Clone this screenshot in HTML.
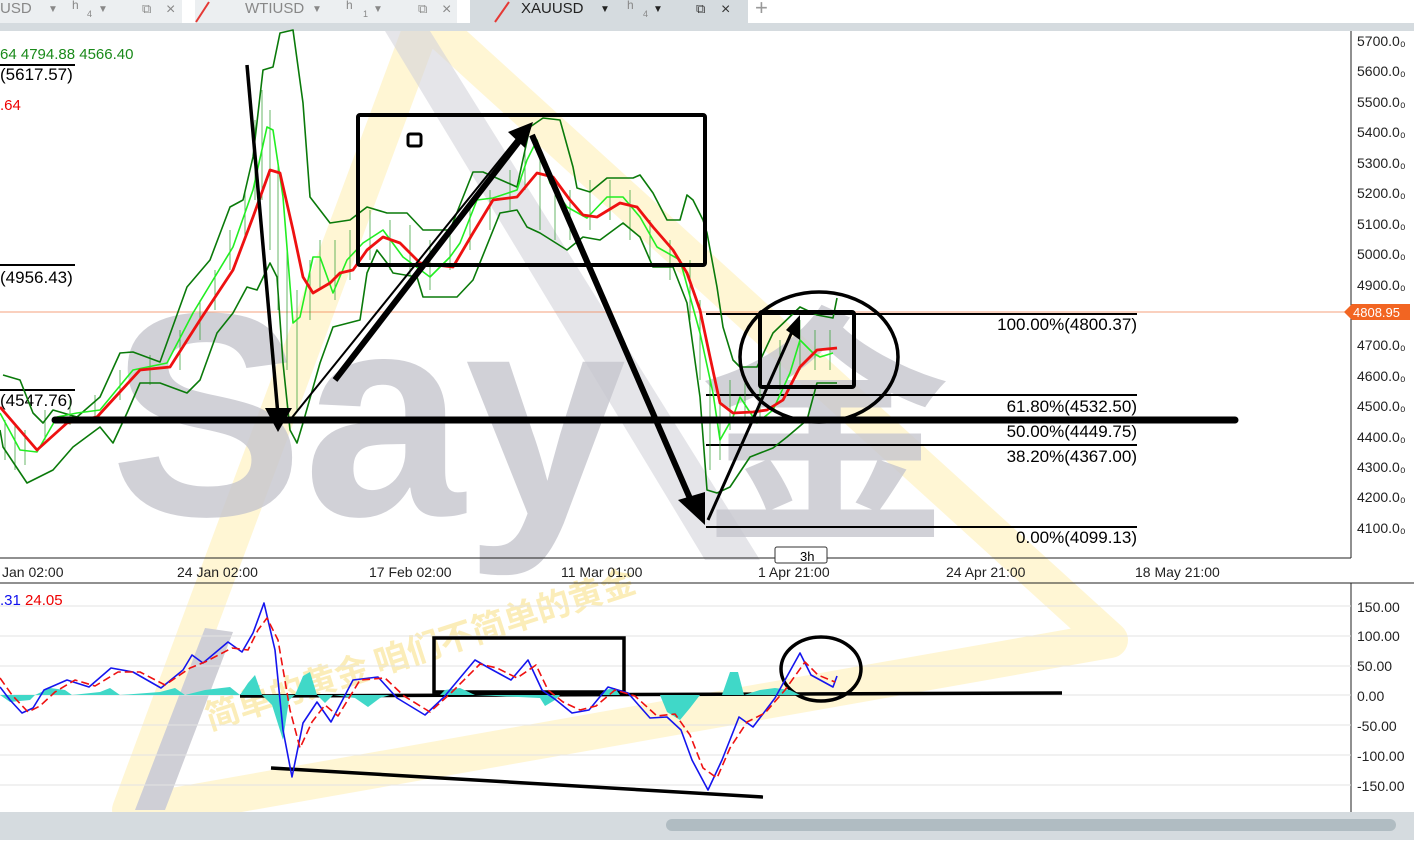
<!DOCTYPE html>
<html><head><meta charset="utf-8"><style>
body{margin:0;width:1414px;height:850px;overflow:hidden;background:#fff;font-family:"Liberation Sans","Noto Sans CJK SC",sans-serif}
svg{position:absolute;left:0;top:0}
</style></head><body>
<svg width="1414" height="850" viewBox="0 0 1414 850" font-family="Liberation Sans, DejaVu Sans, sans-serif">
<!-- watermark -->
<polygon points="130,810 420,31 440,31 1110,640 150,810" fill="none" stroke="#fff4cc" stroke-width="36" stroke-linejoin="round" opacity="0.85"/>
<polygon points="385,31 430,31 760,560 705,560" fill="#d4d4da" opacity="0.6"/>
<polygon points="205,628 233,632 165,810 135,810" fill="#cfcfd6"/>
<text x="110" y="515" font-size="290" font-weight="bold" fill="#c6c6ce" opacity="0.8">Say</text>
<text x="700" y="520" font-size="250" font-weight="bold" fill="#c6c6ce" opacity="0.8" font-family="Noto Sans CJK SC">金</text>
<text x="210" y="730" font-size="34" font-weight="bold" fill="#fbe9a8" opacity="0.8" transform="rotate(-18 210 730)" font-family="Noto Sans CJK SC">简单的黄金 咱们不简单的黄金</text>
<!-- tab bar -->
<rect x="0" y="0" width="1414" height="23" fill="#fff"/>
<rect x="0" y="0" width="182" height="23" fill="#eceff1"/>
<rect x="195" y="0" width="262" height="23" fill="#eceff1"/>
<rect x="470" y="0" width="278" height="23" fill="#d5dbdf"/>
<rect x="0" y="23" width="1414" height="8" fill="#d5dbdf"/>
<g font-size="15" fill="#888">
<text x="0" y="13">USD</text><text x="48" y="12" font-size="10">▼</text><text x="72" y="9" font-size="12">h</text><text x="87" y="17" font-size="9">4</text><text x="98" y="12" font-size="10">▼</text>
<text x="142" y="13" font-size="13">⧉</text><text x="166" y="14" font-size="16">×</text>
<line x1="209" y1="2" x2="196" y2="22" stroke="#e53935" stroke-width="2"/>
<text x="245" y="13">WTIUSD</text><text x="312" y="12" font-size="10">▼</text><text x="346" y="9" font-size="12">h</text><text x="363" y="17" font-size="9">1</text><text x="373" y="12" font-size="10">▼</text>
<text x="418" y="13" font-size="13">⧉</text><text x="442" y="14" font-size="16">×</text>
<line x1="509" y1="2" x2="495" y2="22" stroke="#e53935" stroke-width="2"/>
<text x="521" y="13" fill="#222">XAUUSD</text><text x="600" y="12" font-size="10" fill="#222">▼</text><text x="627" y="9" font-size="12">h</text><text x="643" y="17" font-size="9">4</text><text x="653" y="12" font-size="10" fill="#222">▼</text>
<text x="696" y="13" font-size="13" fill="#333">⧉</text><text x="721" y="14" font-size="16" fill="#333">×</text>
<text x="755" y="15" font-size="22" fill="#999">+</text>
</g>
<!-- axes -->
<line x1="1351" y1="31" x2="1351" y2="558" stroke="#222"/>
<line x1="0" y1="558" x2="1351" y2="558" stroke="#222"/>
<line x1="0" y1="583" x2="1414" y2="583" stroke="#222"/>
<line x1="1351" y1="583" x2="1351" y2="812" stroke="#222"/>
<g font-size="14" fill="#222">
<text x="1357" y="46">5700.0₀</text><text x="1357" y="76">5600.0₀</text><text x="1357" y="107">5500.0₀</text><text x="1357" y="137">5400.0₀</text><text x="1357" y="168">5300.0₀</text><text x="1357" y="198">5200.0₀</text><text x="1357" y="229">5100.0₀</text><text x="1357" y="259">5000.0₀</text><text x="1357" y="290">4900.0₀</text><text x="1357" y="350">4700.0₀</text><text x="1357" y="381">4600.0₀</text><text x="1357" y="411">4500.0₀</text><text x="1357" y="442">4400.0₀</text><text x="1357" y="472">4300.0₀</text><text x="1357" y="502">4200.0₀</text><text x="1357" y="533">4100.0₀</text>
<text x="1357" y="612">150.00</text><text x="1357" y="641">100.00</text><text x="1357" y="671">50.00</text><text x="1357" y="701">0.00</text><text x="1357" y="731">-50.00</text><text x="1357" y="761">-100.00</text><text x="1357" y="791">-150.00</text>
<text x="2" y="577">Jan 02:00</text><text x="177" y="577">24 Jan 02:00</text><text x="369" y="577">17 Feb 02:00</text><text x="561" y="577">11 Mar 01:00</text><text x="758" y="577">1 Apr 21:00</text><text x="946" y="577">24 Apr 21:00</text><text x="1135" y="577">18 May 21:00</text>
</g>
<g stroke="#e3e3e3"><line x1="0" y1="606" x2="1351" y2="606"/><line x1="0" y1="636" x2="1351" y2="636"/><line x1="0" y1="666" x2="1351" y2="666"/><line x1="0" y1="695" x2="1351" y2="695"/><line x1="0" y1="725" x2="1351" y2="725"/><line x1="0" y1="755" x2="1351" y2="755"/><line x1="0" y1="785" x2="1351" y2="785"/></g>
<!-- current price -->
<line x1="0" y1="312" x2="1351" y2="312" stroke="#f08050" stroke-width="0.8"/>
<polygon points="1344,312 1352,304 1410,304 1410,320 1352,320" fill="#f26522"/>
<text x="1353" y="317" font-size="13" fill="#fff">4808.95</text>
<!-- legend -->
<text x="0" y="59" font-size="15" fill="#1a8a1a">64 4794.88 4566.40</text>
<text x="0" y="110" font-size="15" fill="#e00">.64</text>
<text x="0" y="605" font-size="15" fill="#1010ee">.31 <tspan fill="#e00">24.05</tspan></text>
<line x1="0" y1="65" x2="75" y2="65" stroke="#000" stroke-width="2"/><text x="0" y="80" font-size="17">(5617.57)</text>
<line x1="0" y1="265" x2="75" y2="265" stroke="#000" stroke-width="2"/><text x="0" y="283" font-size="17">(4956.43)</text>
<line x1="0" y1="390" x2="75" y2="390" stroke="#000" stroke-width="2"/><text x="0" y="406" font-size="17">(4547.76)</text>
<!-- fib -->
<g stroke="#000" stroke-width="2"><line x1="706" y1="314" x2="1137" y2="314"/><line x1="706" y1="395" x2="1137" y2="395"/><line x1="706" y1="420" x2="1137" y2="420"/><line x1="706" y1="445" x2="1137" y2="445"/><line x1="706" y1="527" x2="1137" y2="527"/></g>
<g font-size="17" text-anchor="end"><text x="1137" y="330">100.00%(4800.37)</text><text x="1137" y="412">61.80%(4532.50)</text><text x="1137" y="437">50.00%(4449.75)</text><text x="1137" y="462">38.20%(4367.00)</text><text x="1137" y="543">0.00%(4099.13)</text></g>
<!-- bars (approx) -->
<g stroke="#2a9a2a" stroke-width="1" opacity="0.7">
<path d="M5,420v40M15,425v45M25,430v35M45,410v30M70,400v25M95,395v25M120,370v30M150,355v30M180,330v40M200,300v40M215,270v40M230,230v40M245,190v50M255,120v80M262,90v110M270,110v140M278,160v150M287,250v120M297,290v120M310,260v60M320,240v50M335,240v60M350,230v50M370,210v50M390,220v50M410,225v50M430,240v50M450,230v40M470,200v50M490,190v40M510,170v40M525,130v60M540,150v80M555,180v60M570,190v50M590,180v50M610,180v40M630,190v50M650,220v40M670,240v40M690,260v60M700,300v80M710,380v90M720,400v60M730,380v50M745,380v40M760,370v50M780,340v50M800,320v50M815,330v40M830,330v40"/>
</g>
<!-- price lines -->
<g fill="none" stroke-width="1.6" stroke-linejoin="round">
<polyline stroke="#0a7a0a" points="3,375 20,380 33,413 43,423 53,410 77,417 100,397 120,353 133,352 160,362 187,287 210,260 230,207 243,200 253,157 263,70 273,67 280,33 293,30 303,103 310,197 330,223 350,220 367,207 387,213 407,213 423,230 450,230 473,172 483,172 517,187 530,127 543,118 560,120 573,167 577,188 590,192 607,178 633,178 640,175 653,193 667,220 680,220 687,195 693,200 703,220 707,233 717,287 723,327 733,360 740,367 757,367 773,333 800,307 817,315 833,318 837,298"/>
<polyline stroke="#0a7a0a" points="0,430 3,447 27,483 53,470 73,447 100,427 113,443 127,413 140,383 160,383 187,393 200,380 217,333 233,313 247,287 257,290 270,263 277,277 283,363 290,430 297,443 303,423 320,363 333,327 360,320 367,273 377,250 387,263 393,273 417,277 423,297 457,297 473,280 500,213 517,210 527,227 540,233 567,250 583,237 600,240 623,223 640,237 653,267 673,267 687,303 700,397 707,490 717,493 730,487 750,457 773,448 787,437 807,420 817,383 837,383"/>
<polyline stroke="#22ee22" points="0,413 20,450 37,452 57,417 77,413 100,410 133,370 167,363 193,313 233,247 253,190 267,127 273,130 283,197 293,323 300,317 313,257 320,257 333,293 347,260 363,243 383,230 403,257 430,277 450,257 460,243 477,200 493,198 517,190 527,160 537,140 550,183 567,207 587,218 607,197 623,197 640,217 657,247 680,260 700,333 713,393 720,440 733,417 740,397 757,423 773,410 790,373 800,340 813,353 820,357 833,353"/>
<polyline stroke="#ee1111" stroke-width="2.8" points="0,407 37,450 67,423 97,417 140,370 170,367 200,320 233,270 253,217 270,170 280,173 293,230 303,277 313,293 330,283 340,273 353,270 367,250 383,237 400,243 420,263 453,267 473,233 493,200 517,197 537,173 553,177 570,200 583,215 597,217 620,203 637,207 653,227 673,250 687,273 700,310 710,357 720,403 733,413 753,412 767,410 783,400 800,367 817,350 837,348"/>
</g>
<!-- annotations -->
<g stroke="#000" fill="none" stroke-width="4">
<rect x="358" y="115" width="347" height="150" rx="2"/>
<rect x="408" y="134" width="13" height="12" stroke-width="3" rx="2"/>
<rect x="760" y="312" width="94" height="75" rx="2"/>
<ellipse cx="819" cy="357" rx="79" ry="65" stroke-width="3.5"/>
<line x1="55" y1="420" x2="1235" y2="420" stroke-width="7" stroke-linecap="round"/>
<line x1="247" y1="65" x2="278" y2="415" stroke-width="3.5"/>
<line x1="532" y1="135" x2="695" y2="510" stroke-width="6"/>
<line x1="290" y1="420" x2="520" y2="135" stroke-width="2"/>
<line x1="335" y1="380" x2="520" y2="140" stroke-width="6"/>
<line x1="708" y1="520" x2="795" y2="325" stroke-width="3"/>
<rect x="434" y="638" width="190" height="54" stroke-width="3.5"/>
<ellipse cx="821" cy="669" rx="40" ry="32" stroke-width="3.5"/>
<line x1="240" y1="696" x2="1062" y2="693" stroke-width="3.5"/>
<line x1="271" y1="768" x2="763" y2="797" stroke-width="3.5"/>
</g>
<g fill="#000"><polygon points="265,408 292,408 278,432"/><polygon points="678,500 705,492 705,525"/><polygon points="508,132 533,122 525,148"/><polygon points="786,330 800,315 800,340"/></g>
<rect x="775" y="547" width="52" height="16" fill="#fff" stroke="#333" rx="2"/><text x="800" y="561" font-size="13">3h</text>
<!-- oscillator histogram -->
<path fill="#40d8c8" d="M0,695 L10,702 L30,700 L35,695 L50,688 L65,690 L72,695 L100,692 L110,688 L120,695 L160,692 L175,688 L185,695 L205,690 L230,687 L240,695 L248,683 L255,675 L262,695 L272,705 L283,740 L289,700 L295,695 L303,676 L310,672 L317,695 L325,703 L333,695 L355,698 L368,707 L380,698 L390,695 L440,695 L445,690 L460,688 L475,695 L540,698 L545,706 L555,700 L560,695 L600,695 L605,690 L615,688 L620,695 L660,695 L667,712 L680,720 L690,708 L700,695 L722,695 L730,672 L738,672 L744,695 L760,690 L775,688 L790,690 L800,695 Z"/>
<g fill="none" stroke-width="1.6" stroke-linejoin="round">
<polyline stroke="#1515ee" points="0,687 10,700 22,713 33,708 44,690 67,680 89,687 111,668 133,672 161,688 183,670 192,655 203,663 228,642 242,652 253,633 264,603 275,650 283,730 292,777 303,723 317,702 331,722 353,680 378,677 397,698 425,715 444,697 475,660 489,668 511,680 528,660 542,690 556,700 572,713 589,710 608,687 628,693 650,718 667,717 681,730 692,760 708,790 722,760 739,717 753,727 775,698 800,653 811,675 833,687 837,676"/>
<polyline stroke="#ee1111" stroke-dasharray="8,4" points="0,678 12,695 28,712 40,706 55,692 75,680 95,686 118,672 140,672 165,685 190,668 205,662 232,648 248,650 258,630 267,618 278,640 290,710 300,748 312,722 325,705 338,716 360,680 385,678 404,696 430,712 452,692 480,664 497,668 517,678 536,665 548,690 563,702 580,710 596,706 615,690 635,696 657,716 675,714 690,735 703,768 717,778 730,748 747,722 765,713 785,690 805,662 818,675 835,682"/>
</g>
<!-- scrollbar -->
<rect x="0" y="812" width="1414" height="28" fill="#d5dbdf"/>
<rect x="666" y="819" width="730" height="12" rx="6" fill="#b0bcc2"/>
</svg>
</body></html>
